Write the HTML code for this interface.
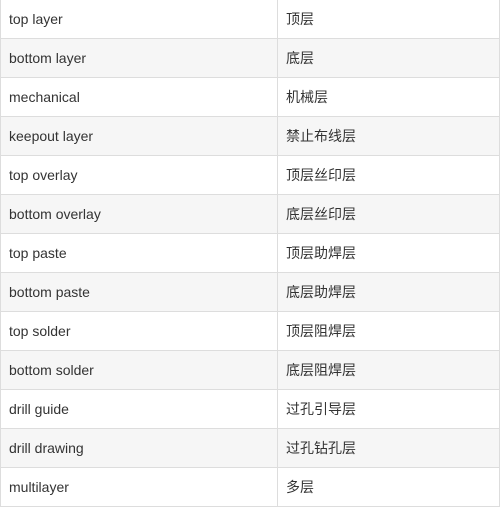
<!DOCTYPE html>
<html><head><meta charset="utf-8"><style>
body{margin:0;background:#fff;width:501px;height:508px;overflow:hidden;font-family:"Liberation Sans","Noto Sans CJK SC",sans-serif;font-size:14px;color:#333}
table{border-collapse:collapse;position:absolute;left:0;top:-1px;width:500px}
td{border:1px solid #ddd;height:38px;padding:0 0 0 8px;box-sizing:border-box;line-height:38px}
td:first-child{width:277px}
tr:nth-child(even) td{background:#f6f6f6}
</style></head><body>
<table>
<tr><td>top layer</td><td>顶层</td></tr>
<tr><td>bottom layer</td><td>底层</td></tr>
<tr><td>mechanical</td><td>机械层</td></tr>
<tr><td>keepout layer</td><td>禁止布线层</td></tr>
<tr><td>top overlay</td><td>顶层丝印层</td></tr>
<tr><td>bottom overlay</td><td>底层丝印层</td></tr>
<tr><td>top paste</td><td>顶层助焊层</td></tr>
<tr><td>bottom paste</td><td>底层助焊层</td></tr>
<tr><td>top solder</td><td>顶层阻焊层</td></tr>
<tr><td>bottom solder</td><td>底层阻焊层</td></tr>
<tr><td>drill guide</td><td>过孔引导层</td></tr>
<tr><td>drill drawing</td><td>过孔钻孔层</td></tr>
<tr><td>multilayer</td><td>多层</td></tr>
</table>
</body></html>
